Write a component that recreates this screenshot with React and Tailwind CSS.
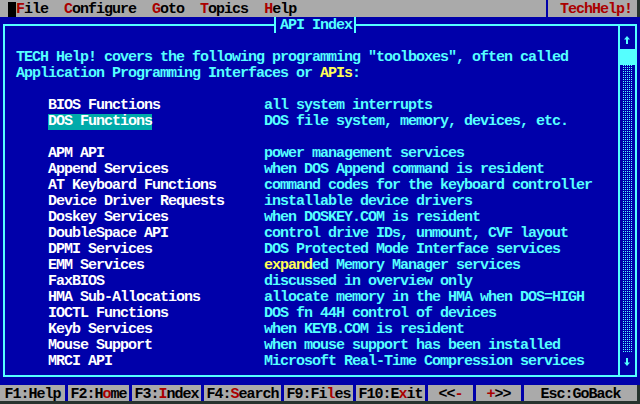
import React from "react";

const entries = [
  ["APM API", "power management services"],
  ["Append Services", "when DOS Append command is resident"],
  ["AT Keyboard Functions", "command codes for the keyboard controller"],
  ["Device Driver Requests", "installable device drivers"],
  ["Doskey Services", "when DOSKEY.COM is resident"],
  ["DoubleSpace API", "control drive IDs, unmount, CVF layout"],
  ["DPMI Services", "DOS Protected Mode Interface services"],
  [
    "EMM Services",
    <>
      <span className="text-[#ffff55]">expand</span>ed Memory Manager services
    </>,
  ],
  ["FaxBIOS", "discussed in overview only"],
  ["HMA Sub-Allocations", "allocate memory in the HMA when DOS=HIGH"],
  ["IOCTL Functions", "DOS fn 44H control of devices"],
  ["Keyb Services", "when KEYB.COM is resident"],
  ["Mouse Support", "when mouse support has been installed"],
  ["MRCI API", "Microsoft Real-Time Compression services"],
];

const keys = [
  { w: "w-[65px]", parts: ["F1:Help"] },
  { w: "w-[61px]", parts: ["F2:H", "o", "me"] },
  { w: "w-[69px]", parts: ["F3:", "I", "ndex"] },
  { w: "w-[77px]", parts: ["F4:", "S", "earch"] },
  { w: "w-[69px]", parts: ["F9:Fi", "l", "es"] },
  { w: "w-[69px]", parts: ["F10:E", "x", "it"] },
  { w: "w-[45px]", parts: ["<<", "-", ""] },
  { w: "w-[45px]", parts: ["", "+", ">>"] },
  { w: "w-[113px]", parts: ["Esc:GoBack"] },
];

function MenuItem({ label }) {
  return (
    <span>
      <span className="text-[#aa0000]">{label[0]}</span>
      {label.slice(1)}
    </span>
  );
}

function Arrow({ down }) {
  return (
    <svg width="8" height="16" viewBox="0 0 8 16" className={down ? "rotate-180" : ""}>
      <path d="M4 3 L7 6.5 L1 6.5 Z" fill="#55ffff" />
      <rect x="3" y="6" width="2" height="5" fill="#55ffff" />
    </svg>
  );
}

function Row({ children, className = "" }) {
  return <div className={`h-[16px] whitespace-pre ${className}`}>{children}</div>;
}

function Entry({ name, desc, active }) {
  return (
    <Row className="flex pl-[32px]">
      <div className="w-[216px] text-white">
        {active ? (
          <span className="inline-block h-[16px] bg-[#00aaaa]">{name}</span>
        ) : (
          name
        )}
      </div>
      <div className="text-[#55ffff]">{desc}</div>
    </Row>
  );
}

export default function App() {
  return (
    <div className="w-[640px] h-[404px] bg-[#27332e] overflow-hidden font-['Liberation_Mono',monospace] font-bold text-[15px] leading-[16px] tracking-[-1px]">
      {/* Menu bar */}
      <div className="flex h-[17px] w-[637px] bg-[#aaaaaa] text-black">
        <div className="flex w-[546px] whitespace-pre">
          <span className="w-[8px]"></span>
          <span className="w-[8px] h-[15px] mt-[2px] bg-black"></span>
          <span className="flex gap-[16px] pt-[3px] leading-[13px]">
            <MenuItem label="File" />
            <MenuItem label="Configure" />
            <MenuItem label="Goto" />
            <MenuItem label="Topics" />
            <MenuItem label="Help" />
          </span>
        </div>
        <div className="w-[2px] h-[17px] bg-[#0000aa]"></div>
        <div className="flex-1 pl-[12px] pt-[3px] leading-[13px] text-[#aa0000]">TechHelp!</div>
      </div>

      {/* Window */}
      <div className="relative h-[368px] pt-[7px] bg-[#0000aa]">
        <div className="absolute left-[274px] top-0 flex h-[16px] bg-[#0000aa] text-[#55ffff]">
          <div className="w-[2px] h-[16px] bg-[#55ffff]"></div>
          <div className="pl-[4px] pr-[2px] pt-[1px] whitespace-pre">API Index</div>
          <div className="w-[2px] h-[16px] bg-[#55ffff]"></div>
        </div>

        <div className="mx-[3px] h-[353px] border-2 border-[#55ffff] flex">
          <div className="flex-1 pl-[11px] pt-[24px] text-[#55ffff]">
            <Row>TECH Help! covers the following programming "toolboxes", often called</Row>
            <Row>
              Application Programming Interfaces or <span className="text-[#ffff55]">APIs</span>:
            </Row>
            <Row> </Row>
            <Entry name="BIOS Functions" desc="all system interrupts" />
            <Entry name="DOS Functions" desc="DOS file system, memory, devices, etc." active />
            <Row> </Row>
            {entries.map(([name, desc]) => (
              <Entry key={name} name={name} desc={desc} />
            ))}
          </div>

          {/* Scroll bar */}
          <div className="w-[17px] border-l-2 border-[#55ffff] pt-[7px] flex flex-col">
            <div className="h-[16px] pl-[3px]">
              <Arrow />
            </div>
            <div className="h-[16px] -ml-[2px] -mr-[1px] bg-[#55ffff]"></div>
            <div className="h-[288px] ml-[3px] w-[9px] bg-[image:conic-gradient(from_90deg_at_1px_1px,transparent_50%,#55ffff_0_75%,transparent_0)] bg-[length:2px_2px]"></div>
            <div className="h-[16px] pl-[3px]">
              <Arrow down />
            </div>
          </div>
        </div>
      </div>

      {/* Function keys */}
      <div className="flex h-[16px] w-[637px] gap-[3px] bg-[#0000aa] text-black">
        {keys.map((k, i) => (
          <div
            key={i}
            className={`${k.w} h-[16px] bg-[#aaaaaa] flex justify-center whitespace-pre pt-[4px] leading-[12px]`}
          >
            <span>{k.parts[0]}</span>
            {k.parts[1] !== undefined && <span className="text-[#aa0000]">{k.parts[1]}</span>}
            {k.parts[2] !== undefined && <span>{k.parts[2]}</span>}
          </div>
        ))}
      </div>
    </div>
  );
}
